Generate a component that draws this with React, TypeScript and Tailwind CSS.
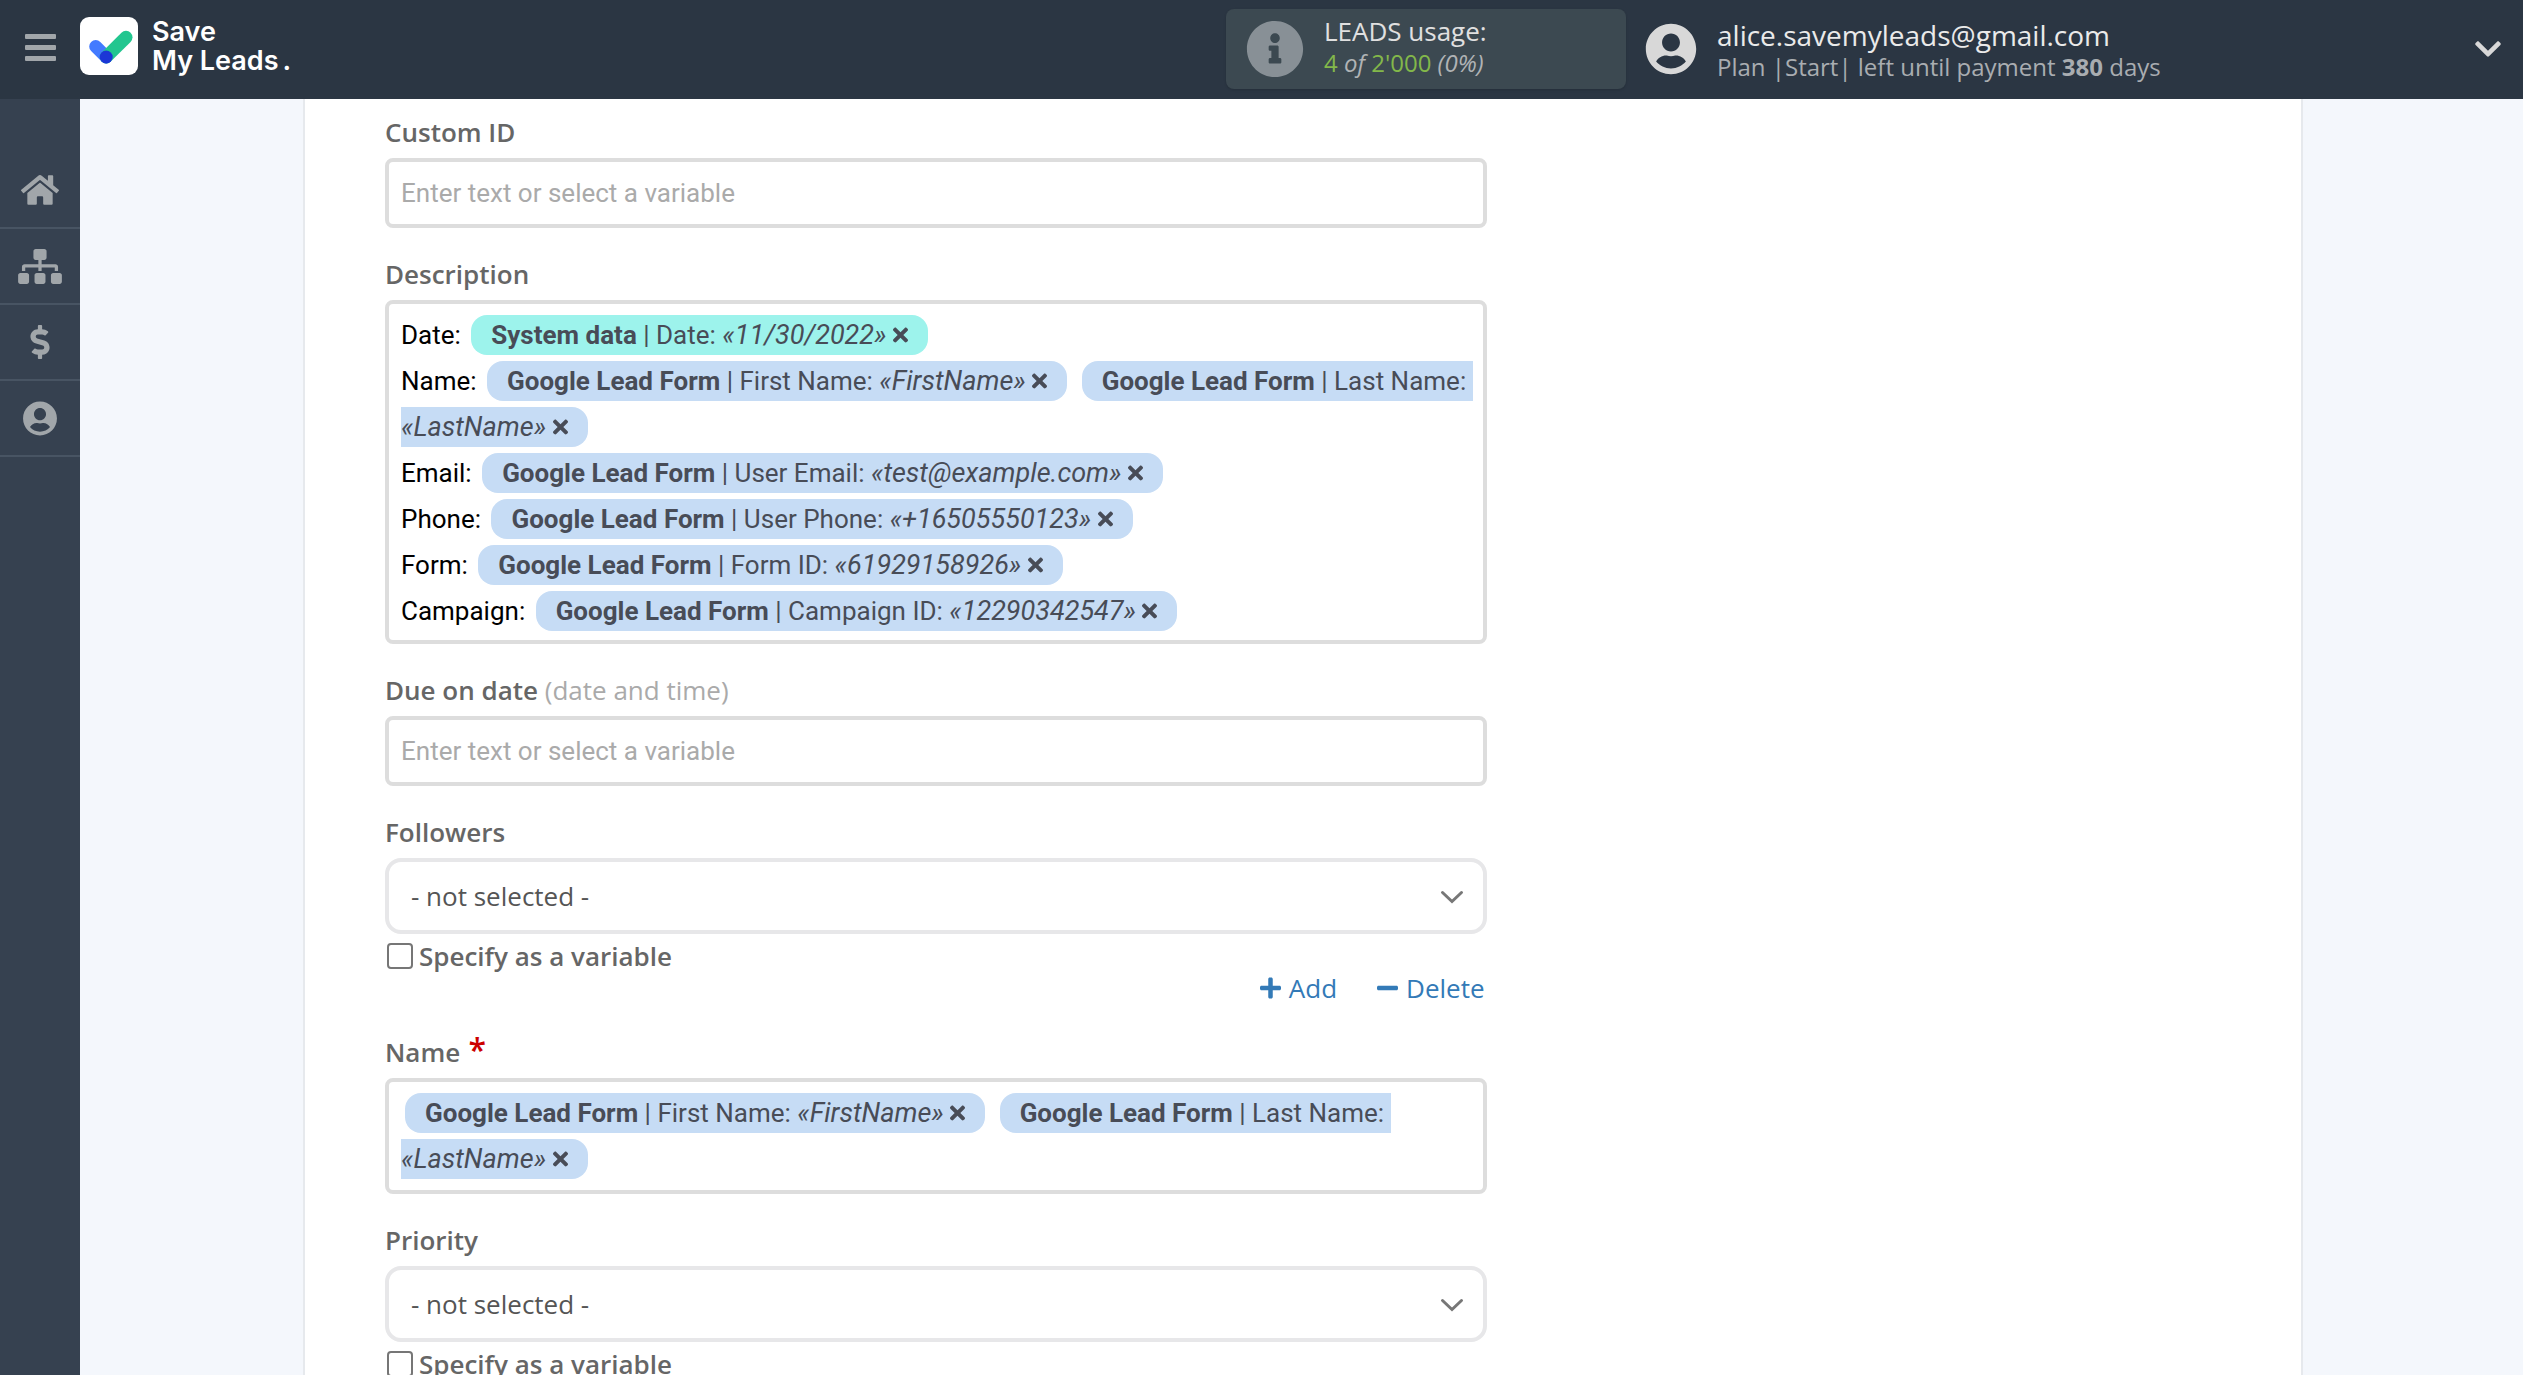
import React from 'react';
import {
  FaChevronDown,
  FaDollarSign,
  FaHome,
  FaInfoCircle,
  FaMinus,
  FaPlus,
  FaSitemap,
  FaTimes,
  FaUserCircle,
} from 'react-icons/fa';

interface Variable {
  source: string;
  field: string;
  value: string;
  system?: boolean;
}

interface Line {
  text?: string;
  variables: Variable[];
}

const SOURCE = 'Google Lead Form';

const fullName: Variable[] = [
  { source: SOURCE, field: 'First Name', value: 'FirstName' },
  { source: SOURCE, field: 'Last Name', value: 'LastName' },
];

const descriptionLines: Line[] = [
  { text: 'Date:', variables: [{ source: 'System data', field: 'Date', value: '11/30/2022', system: true }] },
  { text: 'Name:', variables: fullName },
  { text: 'Email:', variables: [{ source: SOURCE, field: 'User Email', value: 'test@example.com' }] },
  { text: 'Phone:', variables: [{ source: SOURCE, field: 'User Phone', value: '+16505550123' }] },
  { text: 'Form:', variables: [{ source: SOURCE, field: 'Form ID', value: '61929158926' }] },
  { text: 'Campaign:', variables: [{ source: SOURCE, field: 'Campaign ID', value: '12290342547' }] },
];

const menu = [
  { title: 'Home', Icon: FaHome, size: 'h-[34px] w-[38px]' },
  { title: 'Connections', Icon: FaSitemap, size: 'h-[35px] w-11' },
  { title: 'Billing', Icon: FaDollarSign, size: 'h-[34px] w-5' },
  { title: 'Profile', Icon: FaUserCircle, size: 'h-[35px] w-[34px]' },
];

function Logo() {
  return (
    <a href="#" className="flex items-center gap-[14px] text-white">
      <svg className="size-[58px]" viewBox="0 0 58 58" fill="none">
        <rect width="58" height="58" rx="9" fill="#fff" />
        <g strokeWidth="13" strokeLinecap="round">
          <path d="M15.7 29.5L26.2 40" stroke="#437aff" />
          <path d="M26.2 40L46 20.3" stroke="#22c68f" />
        </g>
        <circle cx="26.2" cy="40" r="6.5" fill="#1c36d6" />
      </svg>
      <span className="font-[Inter,sans-serif] text-[27px] leading-[29px] font-semibold">
        Save
        <br />
        My Leads<span className="ml-1">.</span>
      </span>
    </a>
  );
}

function Header() {
  return (
    <header className="flex h-[99px] shrink-0 items-center justify-between bg-[#2b3643] pb-0.5">
      <div className="flex items-center pb-1.5">
        <button type="button" aria-label="Menu" className="flex w-20 justify-center pt-1">
          <svg className="h-[27px] w-[31px]" viewBox="0 0 31 27" fill="#a1a6aa">
            <rect width="31" height="5" rx="1" />
            <rect y="11" width="31" height="5" rx="1" />
            <rect y="22" width="31" height="5" rx="1" />
          </svg>
        </button>
        <Logo />
      </div>

      <div className="flex w-[1297px] items-center pr-5">
        <div className="flex h-20 w-[400px] items-center rounded-lg bg-[#3c4951] pl-5 shadow-sm">
          <FaInfoCircle className="size-[58px] text-[#889096]" />
          <div className="pb-1 pl-5 leading-8">
            <div className="text-[26px] leading-8 text-[#e0e0e0]">LEADS usage:</div>
            <div className="text-2xl leading-8 text-[#83b84a]">
              4 <i className="text-[#b0b3b5]">of</i> 2'000 <i className="text-[#b0b3b5]">(0%)</i>
            </div>
          </div>
        </div>

        <button type="button" className="flex flex-1 items-center pl-[19px] text-left">
          <FaUserCircle className="size-[52px] text-[#d8d8d8]" />
          <span className="flex-1 pt-1 pl-5">
            <span className="block text-[28px] leading-8 text-[#eaeaea]">alice.savemyleads@gmail.com</span>
            <span className="block text-2xl leading-8 text-[#a9adb1]">
              Plan |Start| left until payment <b>380</b> days
            </span>
          </span>
          <FaChevronDown className="size-[30px] text-[#d8d8d8]" />
        </button>
      </div>
    </header>
  );
}

function Sidebar() {
  return (
    <nav className="w-20 shrink-0 bg-[#364150] pt-[54px]">
      {menu.map(({ title, Icon, size }) => (
        <a
          key={title}
          href="#"
          aria-label={title}
          className="flex h-[76px] items-center justify-center border-b-2 border-[#485463] text-[#a1a6aa]"
        >
          <Icon className={size} />
        </a>
      ))}
    </nav>
  );
}

function Pill({ source, field, value, system }: Variable) {
  return (
    <span
      className={
        system
          ? 'mx-1 rounded-2xl bg-[#9df3ec] px-5 py-[5px] text-[#484c57]'
          : 'mx-1 rounded-2xl bg-[#c6dcf5] px-5 py-[5px] text-[#484c57]'
      }
    >
      <b>{source}</b> | {field}: <i className="text-[27px]">«{value}»</i>{' '}
      <button type="button" aria-label="Remove" className="align-[-2px]">
        <FaTimes className="h-[22px] w-[15px]" />
      </button>
    </span>
  );
}

function VariableBox({ labelId, lines }: { labelId: string; lines: Line[] }) {
  return (
    <div
      role="textbox"
      aria-labelledby={labelId}
      className="min-h-[116px] rounded-lg border-4 border-[#ddd] px-3 pt-2 pb-1.5 font-[Roboto,sans-serif] leading-[46px] whitespace-pre-wrap text-black"
    >
      {lines.map((line, i) => (
        <div key={i}>
          {line.text && line.text + ' '}
          {line.variables.map((variable, j) => (
            <React.Fragment key={variable.field}>
              {j > 0 && ' '}
              <Pill {...variable} />
            </React.Fragment>
          ))}
        </div>
      ))}
    </div>
  );
}

function TextField({ id }: { id: string }) {
  return (
    <input
      id={id}
      type="text"
      placeholder="Enter text or select a variable"
      className="block h-[70px] w-full rounded-lg border-4 border-[#ddd] px-3 font-[Roboto,sans-serif] text-black placeholder:text-[#aaa]"
    />
  );
}

function SelectField({ id }: { id: string }) {
  return (
    <>
      <div className="relative">
        <select
          id={id}
          className="block h-[76px] w-full appearance-none rounded-2xl border-4 border-[#e7e7e9] bg-white px-[22px] text-[#555]"
        >
          <option>- not selected -</option>
        </select>
        <svg
          className="pointer-events-none absolute top-8 right-[23px] h-[14px] w-6"
          viewBox="0 0 24 14"
          fill="none"
          stroke="#777"
          strokeWidth="3"
          strokeLinecap="round"
        >
          <path d="M2.500 2.500L12 11.500L21.500 2.500" />
        </svg>
      </div>
      <label className="mt-1.5 flex h-8 items-center gap-1.5 pl-0.5 leading-8 font-semibold">
        <input type="checkbox" className="size-[26px] appearance-none rounded border-2 border-[#767676] bg-white" />
        Specify as a variable
      </label>
    </>
  );
}

interface FieldProps {
  id: string;
  label: string;
  hint?: string;
  required?: boolean;
  children: React.ReactNode;
}

function Field({ id, label, hint, required, children }: FieldProps) {
  return (
    <div>
      <label id={id + '-label'} htmlFor={id} className="mb-2 block h-9 leading-9 font-semibold">
        {label}
        {hint && <span className="font-normal text-[#aaa]"> {hint}</span>}
        {required && <span className="text-[32px] leading-none text-[#c00]"> *</span>}
      </label>
      {children}
    </div>
  );
}

export default function App() {
  return (
    <div className="flex h-screen flex-col overflow-hidden font-['Open_Sans',sans-serif]">
      <Header />
      <div className="flex min-h-0 flex-1">
        <Sidebar />
        <main className="flex-1 overflow-hidden bg-[#f4f7fc] pr-[220px] pl-[223px]">
          <section className="min-h-full border-x-2 border-[#e6e9ed] bg-white px-20 pt-[15px]">
            <form className="flex w-3/5 flex-col gap-7 text-[26px] text-[#666]">
              <Field id="custom-id" label="Custom ID">
                <TextField id="custom-id" />
              </Field>
              <Field id="description" label="Description">
                <VariableBox labelId="description-label" lines={descriptionLines} />
              </Field>
              <Field id="due-date" label="Due on date" hint="(date and time)">
                <TextField id="due-date" />
              </Field>
              <Field id="followers" label="Followers">
                <SelectField id="followers" />
                <div className="flex h-[34px] justify-end gap-10 pr-0.5 leading-8 text-[#337ab7]">
                  <button type="button" className="flex h-8 items-center gap-2">
                    <FaPlus className="h-6 w-[21px]" />
                    Add
                  </button>
                  <button type="button" className="flex h-8 items-center gap-2">
                    <FaMinus className="h-6 w-[21px]" />
                    Delete
                  </button>
                </div>
              </Field>
              <Field id="name" label="Name" required>
                <VariableBox labelId="name-label" lines={[{ variables: fullName }]} />
              </Field>
              <Field id="priority" label="Priority">
                <SelectField id="priority" />
              </Field>
            </form>
          </section>
        </main>
      </div>
    </div>
  );
}
